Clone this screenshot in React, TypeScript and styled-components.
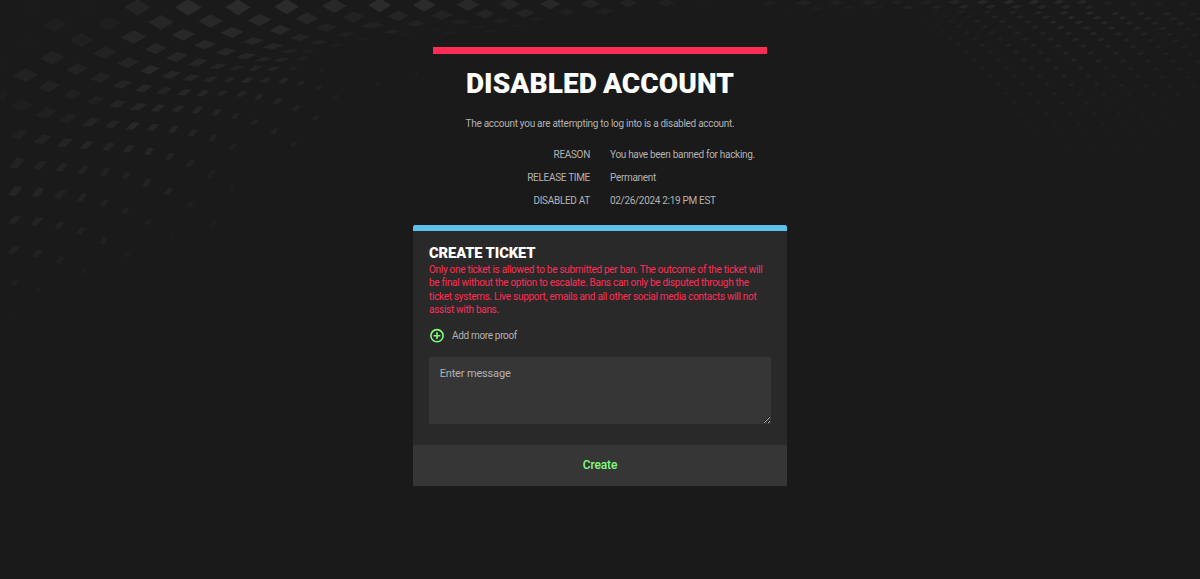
import React from "react";
import styled, { createGlobalStyle } from "styled-components";

const GlobalStyle = createGlobalStyle`
  *, *::before, *::after { box-sizing: border-box; }
  body {
    margin: 0;
    background: #1a1a1a;
    color: #b3b3b3;
    font-family: Roboto, "Liberation Sans", sans-serif;
  }
`;

const Page = styled.div`
  position: relative;
  height: 579px;
  overflow: hidden;
  display: flex;
  justify-content: center;
  background: #1a1a1a;
`;

const Backdrop = styled.svg`
  position: absolute;
  inset: 0;
  width: 1200px;
  height: 579px;
  pointer-events: none;
`;

const Content = styled.main`
  position: relative;
  width: 374px;
  padding-top: 47px;
  display: flex;
  flex-direction: column;
`;

const Banner = styled.header`
  margin: 0 20px;
  border-top: 7px solid #ff2d55;
  text-align: center;
`;

const Title = styled.h1`
  margin: 12px 0 0;
  font: 900 28px/36px Roboto, sans-serif;
  letter-spacing: 0.1px;
  word-spacing: -1px;
  white-space: nowrap;
  color: #fff;
`;

const Intro = styled.p`
  margin: 11px 0 0;
  font-size: 10px;
  letter-spacing: -0.28px;
  line-height: 22px;
  white-space: nowrap;
`;

const Details = styled.dl`
  margin: 8px 0 0;
  display: grid;
  grid-template-columns: 177px 1fr;
  column-gap: 20px;
  font-size: 10px;
  letter-spacing: -0.31px;
  line-height: 23px;
`;

const Term = styled.dt`
  text-align: right;
`;

const Value = styled.dd`
  margin: 0;
`;

const Card = styled.form`
  margin: 13px 0 0;
  border-top: 6px solid #5bc0eb;
  border-radius: 2px 2px 0 0;
  background: #292929;
`;

const CardBody = styled.div`
  height: 214px;
  padding: 13px 16px 0;
  display: flex;
  flex-direction: column;
`;

const CardTitle = styled.h2`
  margin: 0;
  font: 900 14.67px/18px Roboto, sans-serif;
  letter-spacing: -0.08px;
  white-space: nowrap;
  color: #fff;
`;

const Warning = styled.p`
  margin: 1px 0 0;
  font-size: 10px;
  letter-spacing: -0.285px;
  line-height: 13.4px;
  color: #ff2d55;
`;

const AddProof = styled.button`
  margin: 11px 0 0;
  padding: 0;
  height: 16px;
  display: flex;
  align-items: center;
  gap: 7px;
  border: 0;
  background: none;
  font: 10px/16px Roboto, sans-serif;
  letter-spacing: -0.33px;
  color: #b3b3b3;
`;

const Message = styled.textarea`
  margin: 13px 0 0;
  width: 342px;
  height: 67px;
  padding: 9px 10.67px;
  display: block;
  border: 0;
  outline: 0;
  background: #363636;
  font: 11px/16px Roboto, sans-serif;
  letter-spacing: -0.16px;
  color: #fff;
  &::placeholder { color: #b3b3b3; opacity: 1; }
`;

const Submit = styled.button`
  width: 100%;
  height: 41px;
  padding: 0 0 1px;
  display: block;
  border: 0;
  background: #363636;
  font: 500 12px/39px Roboto, sans-serif;
  letter-spacing: -0.1px;
  color: #80ff80;
`;

type Tile = [x: number, y: number, w: number, h: number, slant: number, tone: number];

/* Tiles of the perspective lattice, on a 3600 x 1737 grid. */
const TILES: Tile[] = [
  [95, 25, 38, 20, 0, 1], [258, 22, 30, 22, 0, 1], [412, 22, 39, 25, 0, 5], [565, 22, 40, 25, 0, 8], [714, 22, 38, 24, 0, 8], [860, 20, 37, 23, 0, 8], [1003, 18, 37, 22, 0, 7], [1139, 16, 35, 21, 0, 8], [1273, 15, 34, 20, 0, 8], [1404, 14, 35, 19, 0, 7], [1528, 13, 32, 17, 0, 6], [1651, 12, 31, 16, 0, 7], [1771, 11, 30, 14, 0, 5], [1885, 9, 28, 13, 0, 4], [2000, 9, 27, 12, 0, 3], [2110, 9, 26, 10, 0, 1],
  [166, 74, 38, 23, .1, 2], [326, 71, 36, 23, .1, 2], [483, 67, 38, 22, 0, 6], [632, 63, 37, 20, 0, 7], [779, 60, 36, 19, .1, 7], [921, 55, 35, 18, .1, 6], [1061, 51, 34, 17, .1, 4], [1195, 48, 33, 16, .1, 5], [1326, 45, 34, 15, .1, 4], [1455, 42, 31, 14, .1, 5], [1575, 39, 30, 13, .2, 5], [1700, 36, 29, 11, .2, 3], [1815, 34, 28, 10, .2, 3],
  [82, 131, 38, 22, 0, 1], [244, 120, 35, 21, 0, 3], [401, 111, 39, 20, .1, 6], [550, 104, 35, 18, .1, 7], [696, 97, 35, 17, .1, 7], [840, 90, 33, 15, .2, 7], [980, 83, 34, 13, .2, 4], [1118, 76, 34, 11, .2, 4], [1248, 71, 32, 10, .3, 4], [1380, 66, 30, 8, .3, 3], [1500, 62, 28, 7, .3, 3], [1610, 57, 26, 6, .3, 2],
  [12, 187, 27, 18, 0, 1], [157, 173, 37, 22, .1, 4], [315, 158, 36, 19, .2, 4], [467, 146, 33, 17, .2, 6], [615, 134, 34, 14, .2, 7], [760, 123, 32, 12, .3, 6], [900, 112, 31, 11, .3, 5], [1038, 103, 29, 8, .4, 3], [1175, 95, 29, 6, .4, 4], [1308, 88, 26, 5, .5, 2], [1430, 82, 27, 5, .5, 2], [1550, 77, 25, 5, .5, 2],
  [77, 226, 37, 21, .1, 4], [231, 207, 34, 18, .3, 4], [384, 188, 33, 16, .3, 5], [531, 170, 34, 15, .5, 6], [677, 155, 31, 12, .4, 6], [819, 139, 32, 9, .5, 6], [955, 127, 27, 8, .6, 4], [1088, 116, 26, 5, .6, 2], [1218, 104, 26, 5, .6, 2], [1350, 98, 26, 5, .6, 2], [1470, 94, 25, 5, .6, 2],
  [10, 284, 14, 17, .3, 2], [147, 259, 32, 19, .3, 4], [302, 233, 32, 16, .4, 4], [450, 209, 30, 14, .5, 7], [594, 187, 29, 12, .7, 6], [738, 168, 31, 9, .6, 6], [870, 153, 28, 7, .7, 4], [1008, 135, 25, 5, .7, 2],
  [66, 317, 33, 20, .3, 2], [218, 283, 27, 17, .4, 3], [367, 253, 29, 13, .7, 5], [514, 224, 29, 12, .8, 6], [654, 199, 27, 9, .8, 5], [790, 178, 27, 7, .8, 5], [924, 154, 23, 5, .8, 3],
  [139, 339, 32, 18, .6, 3], [286, 301, 27, 14, .6, 3], [431, 265, 27, 12, .8, 6], [573, 233, 26, 10, .9, 6], [710, 204, 24, 7, .9, 4], [846, 179, 25, 6, .9, 5],
  [205, 355, 28, 15, .8, 3], [352, 312, 27, 12, .8, 5], [492, 272, 25, 11, 1, 5], [632, 238, 24, 9, 1, 5], [765, 205, 22, 8, 1, 5], [905, 175, 20, 6, 1, 3],
  [60, 403, 25, 17, .7, 3], [128, 418, 28, 15, .8, 4], [272, 367, 26, 13, 1, 5], [415, 320, 26, 11, 1, 6], [553, 277, 22, 10, 1, 6], [688, 239, 20, 8, 1, 5], [820, 206, 20, 7, 1, 5],
  [195, 428, 25, 14, 1, 5], [337, 373, 24, 12, 1, 5], [474, 324, 22, 11, 1, 6], [609, 280, 21, 10, 1, 6], [742, 240, 20, 8, 1, 6], [880, 205, 17, 6, 1, 3],
  [51, 489, 23, 18, .9, 5], [260, 435, 22, 13, 1, 6], [399, 378, 22, 12, 1, 7], [534, 326, 20, 10, 1, 6], [666, 280, 19, 8, 1, 5], [797, 240, 19, 8, 1, 5], [965, 210, 14, 6, 1, 2],
  [120, 496, 21, 14, 1, 5], [325, 440, 19, 13, 1, 5], [459, 382, 19, 11, 1, 6], [592, 330, 18, 11, 1, 6], [725, 282, 18, 9, 1, 5], [850, 242, 18, 9, 1, 5],
  [186, 502, 20, 14, 1, 5], [386, 446, 18, 12, 1, 6], [520, 388, 16, 12, .9, 6], [650, 337, 16, 11, .9, 5], [777, 290, 15, 9, 1, 5], [903, 250, 14, 8, .8, 4],
  [249, 510, 18, 14, 1, 5], [447, 454, 15, 12, .9, 6], [578, 398, 15, 12, .9, 5], [706, 348, 15, 10, .9, 4], [833, 304, 16, 10, .9, 5], [957, 262, 12, 8, .6, 3],
  [315, 516, 16, 13, 1, 5], [509, 469, 15, 12, .9, 5], [638, 414, 14, 12, .9, 4], [763, 366, 13, 10, .8, 4], [889, 324, 14, 10, .8, 4], [1008, 290, 12, 9, .7, 2], [1131, 252, 9, 7, .6, 2], [1250, 224, 9, 7, .6, 2],
  [378, 527, 15, 12, .9, 4], [571, 490, 14, 12, .9, 5], [699, 440, 13, 11, .8, 3], [823, 394, 13, 10, .8, 4], [947, 353, 11, 9, .6, 3], [1065, 323, 8, 10, .4, 1], [1185, 285, 9, 9, .4, 1],
  [46, 573, 22, 16, 1, 7], [114, 577, 20, 15, 1, 7], [181, 583, 20, 14, 1, 5], [246, 592, 17, 14, 1, 5], [441, 548, 15, 14, .9, 5], [634, 522, 14, 13, .8, 3], [882, 432, 12, 10, .6, 3], [1120, 360, 11, 9, .4, 1],
  [312, 609, 15, 13, .8, 4], [376, 632, 13, 11, .8, 4], [505, 574, 14, 12, .9, 5], [698, 566, 10, 16, .4, 2], [571, 613, 12, 11, .6, 3],
  [44, 660, 20, 13, 1, 6], [110, 664, 20, 13, 1, 6], [178, 676, 16, 12, .9, 4], [243, 693, 15, 13, .8, 4], [311, 722, 13, 13, .8, 4], [444, 667, 13, 11, .6, 3], [640, 670, 12, 15, .4, 2], [513, 711, 10, 9, .4, 2],
  [40, 750, 19, 13, 1, 5], [111, 761, 18, 13, .9, 4], [180, 781, 14, 12, .8, 3], [250, 815, 12, 12, .6, 2], [382, 765, 12, 12, .5, 2], [45, 847, 13, 11, .6, 3], [115, 872, 12, 10, .4, 2], [322, 859, 9, 9, .4, 1], [190, 898, 9, 9, .4, 1], [40, 950, 14, 9, .4, 1],
  [2310, 9, 24, 8, .1, 2], [2412, 9, 27, 8, .2, 4], [2509, 8, 24, 8, .2, 3], [2606, 7, 24, 9, .2, 4], [2693, 7, 22, 8, .2, 3], [2780, 7, 22, 8, .3, 3], [2865, 6, 21, 8, .3, 5], [2948, 6, 20, 7, .4, 7], [3027, 6, 19, 7, .4, 7], [3103, 6, 18, 7, .5, 7], [3177, 6, 17, 7, .5, 7], [3247, 6, 16, 7, .5, 6],
  [2360, 27, 20, 6, .3, 1], [2450, 25, 20, 6, .3, 2], [2545, 23, 20, 6, .3, 2], [2635, 22, 20, 6, .3, 2], [2725, 22, 20, 6, .4, 4], [2810, 21, 18, 6, .4, 4], [2892, 20, 18, 6, .6, 6], [2972, 20, 17, 6, .6, 6], [3050, 20, 17, 6, .6, 6], [3126, 21, 16, 6, .6, 6], [3198, 21, 16, 6, .6, 6], [3268, 22, 15, 6, .6, 5],
  [3325, 10, 16, 7, .5, 3], [3400, 12, 16, 7, .5, 3], [3475, 12, 15, 7, .5, 3], [3550, 14, 15, 7, .5, 2],
];

/* The right half of the wave: strands that sink and fade while they near the edge. */
const STRANDS: Tile[] = [];
for (let strand = 0; strand < 15; strand++) {
  for (let step = 0; step < 19; step++) {
    const x = 2730 + strand * 77 + step * 24 - strand * step * 0.3;
    const y = 34 + step * (13 + step * 0.62) + strand * 0.8;
    const reach = x > 3225 ? 720 : 560;
    const edge = Math.max(0, 1 - Math.abs(x - 3225) / reach);
    const fade = Math.max(0, 1 - step / 21);
    if (x < 3600 && edge > 0) {
      STRANDS.push([x, y, 14 - step * 0.4, 5 + step * 0.06, 0.5, 7 * edge * fade + 0.3]);
    }
  }
}

const outline = ([x, y, w, h, slant]: Tile) => {
  const dy = h * slant * 0.75;
  return `M${x - w} ${y + dy}L${x} ${y - h}L${x + w} ${y - dy}L${x} ${y + h}Z`;
};

const opacity = ([, y, , , , tone]: Tile) => tone * (y > 480 ? 0.0075 : 0.0092);

const Lattice = () => (
  <Backdrop viewBox="0 0 3600 1737" aria-hidden="true">
    {[...TILES, ...STRANDS].map((tile, i) => (
      <path key={i} d={outline(tile)} fill="#fff" fillOpacity={opacity(tile)} />
    ))}
  </Backdrop>
);

const PlusCircle = () => (
  <svg width="16" height="16" viewBox="0 0 16 16" fill="none" stroke="#80ff80" strokeWidth="1.6">
    <circle cx="8" cy="7.7" r="6.1" />
    <path d="M8 4.3v6.8M4.6 7.7h6.8" />
  </svg>
);

const details = [
  ["REASON", "You have been banned for hacking."],
  ["RELEASE TIME", "Permanent"],
  ["DISABLED AT", "02/26/2024 2:19 PM EST"],
];

export default function App() {
  return (
    <Page>
      <GlobalStyle />
      <Lattice />
      <Content>
        <Banner>
          <Title>DISABLED ACCOUNT</Title>
          <Intro>The account you are attempting to log into is a disabled account.</Intro>
        </Banner>
        <Details>
          {details.map(([term, value]) => (
            <React.Fragment key={term}>
              <Term>{term}</Term>
              <Value>{value}</Value>
            </React.Fragment>
          ))}
        </Details>
        <Card>
          <CardBody>
            <CardTitle>CREATE TICKET</CardTitle>
            <Warning>
              Only one ticket is allowed to be submitted per ban. The outcome of the ticket will be
              final without the option to escalate. Bans can only be disputed through the ticket
              systems. Live support, emails and all other social media contacts will not assist with
              bans.
            </Warning>
            <AddProof type="button">
              <PlusCircle />
              Add more proof
            </AddProof>
            <Message placeholder="Enter message" />
          </CardBody>
          <Submit type="button">Create</Submit>
        </Card>
      </Content>
    </Page>
  );
}
